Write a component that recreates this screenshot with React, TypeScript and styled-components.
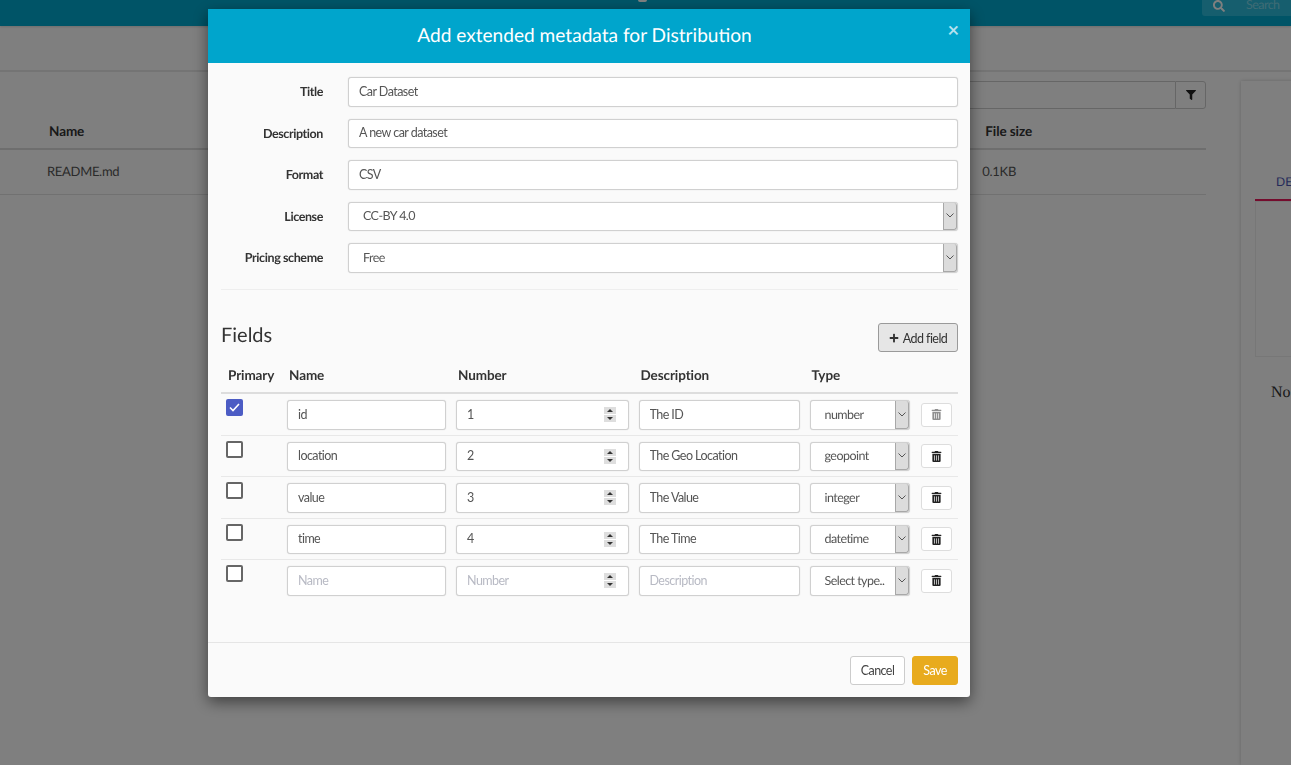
import * as React from 'react'
import styled, { createGlobalStyle } from 'styled-components'
import { FaFilter, FaPlus, FaSearch, FaTrashAlt } from 'react-icons/fa'

const GlobalStyle = createGlobalStyle`
  html, body {
    margin: 0;
    height: 100%;
    overflow: hidden;
    background: #fff;
    font-family: Lato, "Noto Sans", sans-serif;
    font-size: 12.5px;
    letter-spacing: -0.55px;
    text-rendering: geometricPrecision;
    color: #555;
  }
  * {
    box-sizing: border-box;
  }
`

const Page = styled.div`
  height: 765px;
  display: flex;
  flex-direction: column;
`

const TopBar = styled.header`
  height: 26px;
  flex: none;
  background: #00a9cf;
  box-shadow: 0 1px 2px rgba(0, 0, 0, 0.15);
  display: flex;
  justify-content: space-between;
  padding-left: 638px;
`

const TopMark = styled.span`
  width: 9px;
  height: 2px;
  background: #fff;
  border-radius: 0 0 4px 4px;
`

const SearchBox = styled.div`
  width: 89px;
  height: 16px;
  background: #2cbcdc;
  border-radius: 0 0 0 3px;
  color: #7fd8ea;
  display: flex;
  align-items: flex-start;
  gap: 21px;
  padding-left: 11px;
  font-size: 12.5px;
  line-height: 9px;
  & > svg {
    color: #fff;
    font-size: 12px;
  }
`

const SubBar = styled.div`
  height: 46px;
  flex: none;
  border-bottom: 2px solid #e8e8e8;
`

const Content = styled.main`
  flex: 1;
  display: flex;
`

const FileColumn = styled.section`
  width: 1206px;
  flex: none;
  padding-top: 9px;
`

const FilterRow = styled.div`
  display: flex;
  justify-content: flex-end;
  height: 28px;
`

const FilterInput = styled.div`
  width: 400px;
  border: 1px solid #ccc;
  border-right: 0;
  border-radius: 3px 0 0 3px;
`

const FilterButton = styled.div`
  width: 31px;
  border: 1px solid #ccc;
  border-radius: 0 3px 3px 0;
  display: flex;
  align-items: center;
  justify-content: center;
  color: #222;
  font-size: 10px;
`

const FileHead = styled.div`
  height: 41px;
  padding: 4px 174px 0 49px;
  border-bottom: 2px solid #ddd;
  display: flex;
  justify-content: space-between;
  align-items: center;
  color: #333;
  font-size: 13.5px;
  letter-spacing: -0.1px;
  font-weight: 700;
`

const FileRow = styled.div`
  height: 45px;
  border-bottom: 1px solid #e3e3e3;
  display: flex;
  justify-content: space-between;
  align-items: center;
  padding: 0 190px 2px 47px;
  color: #555;
  font-size: 13px;
  letter-spacing: -0.3px;
`

const SidePanel = styled.aside`
  flex: 1;
  margin: 9px 0 0 35px;
  padding: 91px 0 0 14px;
  box-shadow: 0 0 4px rgba(0, 0, 0, 0.2);
`

const SideTab = styled.div`
  height: 29px;
  padding: 2px 0 0 21px;
  color: #4a55b5;
  font-size: 12px;
  letter-spacing: 0;
  border-bottom: 2px solid #e8195b;
`

const SideBox = styled.div`
  height: 156px;
  border: 1px solid #eee;
`

const SideNote = styled.div`
  margin: 27px 0 0 16px;
  color: #333;
  font-family: "Liberation Serif", serif;
  font-size: 16px;
  letter-spacing: 0;
`

const Overlay = styled.div`
  position: fixed;
  inset: 0;
  background: rgba(0, 0, 0, 0.5);
`

const Modal = styled.div`
  position: fixed;
  left: 208px;
  top: 9px;
  width: 762px;
  height: 688px;
  background: #fafafa;
  border-radius: 0 0 3px 3px;
  box-shadow: 0 5px 15px rgba(0, 0, 0, 0.5);
  display: flex;
  flex-direction: column;
`

const ModalHeader = styled.div`
  height: 54px;
  flex: none;
  background: #00a5cc;
  color: #fff;
  font-size: 19.1px;
  letter-spacing: 0;
  display: flex;
  align-items: center;
  justify-content: center;
  padding: 0 9px 1px 0;
  position: relative;
`

const CloseMark = styled.span`
  position: absolute;
  right: 11px;
  top: 8px;
  color: #b5e2ef;
  font-size: 20px;
  font-weight: 700;
  line-height: 26px;
`

const ModalBody = styled.div`
  flex: 1;
  padding: 14px 12px 0 13px;
`

const MetaForm = styled.div`
  display: grid;
  grid-template-columns: 102px 1fr;
  column-gap: 25px;
  row-gap: 12px;
  align-items: center;
  padding-bottom: 16.5px;
  border-bottom: 1px solid #eee;
`

const MetaLabel = styled.label`
  text-align: right;
  color: #333;
  font-weight: 700;
  letter-spacing: -0.4px;
`

const TextField = styled.input`
  width: 100%;
  height: 29.5px;
  padding: 0 10px 1px;
  border: 1px solid #d0d0d0;
  border-radius: 3px;
  box-shadow: 0 0 1px #ccc;
  background: #fff;
  color: #555;
  font: inherit;
  letter-spacing: inherit;
  outline: none;
  &::placeholder {
    color: #b8bac4;
  }
`

const SelectBox = styled.div`
  height: 29.5px;
  display: flex;
  justify-content: space-between;
  align-items: center;
  padding-left: 14px;
  border: 1px solid #d0d0d0;
  border-radius: 3px;
  box-shadow: 0 0 1px #ccc;
  background: #fff;
  color: #555;
  white-space: nowrap;
`

const SelectValue = styled.span`
  padding-bottom: 1px;
`

const SelectArrow = styled.span`
  width: 14px;
  height: 100%;
  flex: none;
  background: #dcdcdc;
  border: 1px solid #a8a8a8;
  border-width: 0 1px 1px 1px;
  border-radius: 0 3px 3px 0;
  display: flex;
  align-items: center;
  justify-content: center;
`

const NumberBox = styled.div`
  height: 29.5px;
  display: flex;
  align-items: center;
  padding: 0 12px 0 10px;
  border: 1px solid #d0d0d0;
  border-radius: 3px;
  box-shadow: 0 0 1px #ccc;
  background: #fff;
  & > input {
    flex: 1;
    min-width: 0;
    border: 0;
    padding: 0 0 1px;
    background: transparent;
    color: #555;
    font: inherit;
    letter-spacing: inherit;
    outline: none;
  }
  & > input::placeholder {
    color: #b8bac4;
  }
`

const Spinner = styled.span`
  width: 12px;
  height: 15px;
  flex: none;
  background: linear-gradient(#dedede 0 46%, #fff 46% 54%, #dedede 54%);
  display: flex;
  flex-direction: column;
  align-items: center;
  justify-content: space-between;
  padding: 2px 0;
`

const SpinUp = styled.i`
  border: 3px solid transparent;
  border-top: 0;
  border-bottom: 3px solid #333;
`

const SpinDown = styled.i`
  border: 3px solid transparent;
  border-bottom: 0;
  border-top: 3px solid #333;
`

const FieldsHead = styled.div`
  display: flex;
  justify-content: space-between;
  align-items: flex-start;
  margin-top: 33px;
  height: 30px;
`

const FieldsTitle = styled.h2`
  margin: 0;
  color: #333;
  font-size: 20px;
  font-weight: 400;
  line-height: 24px;
  letter-spacing: 0;
`

const AddButton = styled.button`
  width: 80px;
  height: 29px;
  padding: 1px 0 0;
  border: 1px solid #9a9a9a;
  border-radius: 3px;
  background: #e6e6e6;
  color: #333;
  font: inherit;
  letter-spacing: inherit;
  display: flex;
  align-items: center;
  justify-content: center;
  gap: 4px;
`

const rowColumns = `
  display: grid;
  grid-template-columns: 56px 159px 172.5px 161px 100px 1fr;
  column-gap: 10px;
`

const TableHead = styled.div`
  ${rowColumns}
  align-items: center;
  height: 40px;
  margin-top: 1px;
  padding-top: 3px;
  border-bottom: 2px solid #ddd;
  color: #333;
  font-size: 13.5px;
  letter-spacing: -0.1px;
  font-weight: 700;
  & > span {
    padding-left: 2px;
  }
  & > span:first-child {
    padding-left: 7px;
  }
`

const TableRow = styled.div`
  ${rowColumns}
  align-items: start;
  height: 41.5px;
  padding-top: 6px;
  border-bottom: 1px solid #e8e8e8;
  &:last-child {
    border-bottom: 0;
  }
`

const CheckMark = styled.span<{ $checked: boolean }>`
  width: 17px;
  height: 17px;
  margin: -1px 0 0 5px;
  border: 2px solid ${p => (p.$checked ? '#4c5cc4' : '#666')};
  border-radius: 2px;
  background: ${p => (p.$checked ? '#4c5cc4' : '#fff')};
  display: flex;
  align-items: center;
  justify-content: center;
`

const TrashButton = styled.button<{ $faded: boolean }>`
  width: 31px;
  height: 24px;
  margin: 2.5px 0 0 1.5px;
  padding: 0;
  border: 1px solid #ddd;
  border-radius: 3px;
  background: #fff;
  color: #222;
  font-size: 11px;
  display: flex;
  align-items: center;
  justify-content: center;
  & > svg {
    opacity: ${p => (p.$faded ? 0.5 : 1)};
  }
`

const ModalFooter = styled.div`
  height: 55px;
  flex: none;
  border-top: 1px solid #e5e5e5;
  display: flex;
  justify-content: flex-end;
  align-items: flex-start;
  gap: 7px;
  padding: 13px 12px 0 0;
`

const CancelButton = styled.button`
  width: 55px;
  height: 29px;
  padding: 0;
  border: 1px solid #ccc;
  border-radius: 3px;
  background: #fff;
  color: #444;
  font: inherit;
  letter-spacing: inherit;
`

const SaveButton = styled.button`
  width: 46px;
  height: 29px;
  padding: 0;
  border: 1px solid #e8ab1e;
  border-radius: 3px;
  background: #e8ab1e;
  color: #fff;
  font: inherit;
  letter-spacing: inherit;
`

const Chevron = () => (
  <svg width="8" height="5" viewBox="0 0 8 5" fill="none" stroke="#555" strokeWidth="1">
    <path d="M0.5 0.5 L4 4 L7.5 0.5" />
  </svg>
)

const Select = ({ value }: { value: string }) => (
  <SelectBox>
    <SelectValue>{value}</SelectValue>
    <SelectArrow>
      <Chevron />
    </SelectArrow>
  </SelectBox>
)

const fields = [
  { name: 'id', number: '1', description: 'The ID', type: 'number', primary: true },
  { name: 'location', number: '2', description: 'The Geo Location', type: 'geopoint', primary: false },
  { name: 'value', number: '3', description: 'The Value', type: 'integer', primary: false },
  { name: 'time', number: '4', description: 'The Time', type: 'datetime', primary: false },
  { name: '', number: '', description: '', type: 'Select type..', primary: false },
]

const App = () => {
  return (
    <>
      <GlobalStyle />
      <Page>
        <TopBar>
          <TopMark />
          <SearchBox>
            <FaSearch />
            Search
          </SearchBox>
        </TopBar>
        <SubBar />
        <Content>
          <FileColumn>
            <FilterRow>
              <FilterInput />
              <FilterButton>
                <FaFilter />
              </FilterButton>
            </FilterRow>
            <FileHead>
              <span>Name</span>
              <span>File size</span>
            </FileHead>
            <FileRow>
              <span>README.md</span>
              <span>0.1KB</span>
            </FileRow>
          </FileColumn>
          <SidePanel>
            <SideTab>DET</SideTab>
            <SideBox />
            <SideNote>No</SideNote>
          </SidePanel>
        </Content>
      </Page>
      <Overlay />
      <Modal>
        <ModalHeader>
          Add extended metadata for Distribution
          <CloseMark>×</CloseMark>
        </ModalHeader>
        <ModalBody>
          <MetaForm>
            <MetaLabel>Title</MetaLabel>
            <TextField readOnly value="Car Dataset" />
            <MetaLabel>Description</MetaLabel>
            <TextField readOnly value="A new car dataset" />
            <MetaLabel>Format</MetaLabel>
            <TextField readOnly value="CSV" />
            <MetaLabel>License</MetaLabel>
            <Select value="CC-BY 4.0" />
            <MetaLabel>Pricing scheme</MetaLabel>
            <Select value="Free" />
          </MetaForm>
          <FieldsHead>
            <FieldsTitle>Fields</FieldsTitle>
            <AddButton>
              <FaPlus size={10} />
              Add field
            </AddButton>
          </FieldsHead>
          <TableHead>
            <span>Primary</span>
            <span>Name</span>
            <span>Number</span>
            <span>Description</span>
            <span>Type</span>
          </TableHead>
          {fields.map((field, i) => (
            <TableRow key={i}>
              <CheckMark $checked={field.primary}>
                {field.primary && (
                  <svg width="11" height="9" viewBox="0 0 11 9" fill="none" stroke="#fff" strokeWidth="1.6">
                    <path d="M1 4.5 L4 7.5 L10 1" />
                  </svg>
                )}
              </CheckMark>
              <TextField readOnly value={field.name} placeholder="Name" />
              <NumberBox>
                <input readOnly value={field.number} placeholder="Number" />
                <Spinner>
                  <SpinUp />
                  <SpinDown />
                </Spinner>
              </NumberBox>
              <TextField readOnly value={field.description} placeholder="Description" />
              <Select value={field.type} />
              <TrashButton $faded={i === 0}>
                <FaTrashAlt />
              </TrashButton>
            </TableRow>
          ))}
        </ModalBody>
        <ModalFooter>
          <CancelButton>Cancel</CancelButton>
          <SaveButton>Save</SaveButton>
        </ModalFooter>
      </Modal>
    </>
  )
}

export default App
